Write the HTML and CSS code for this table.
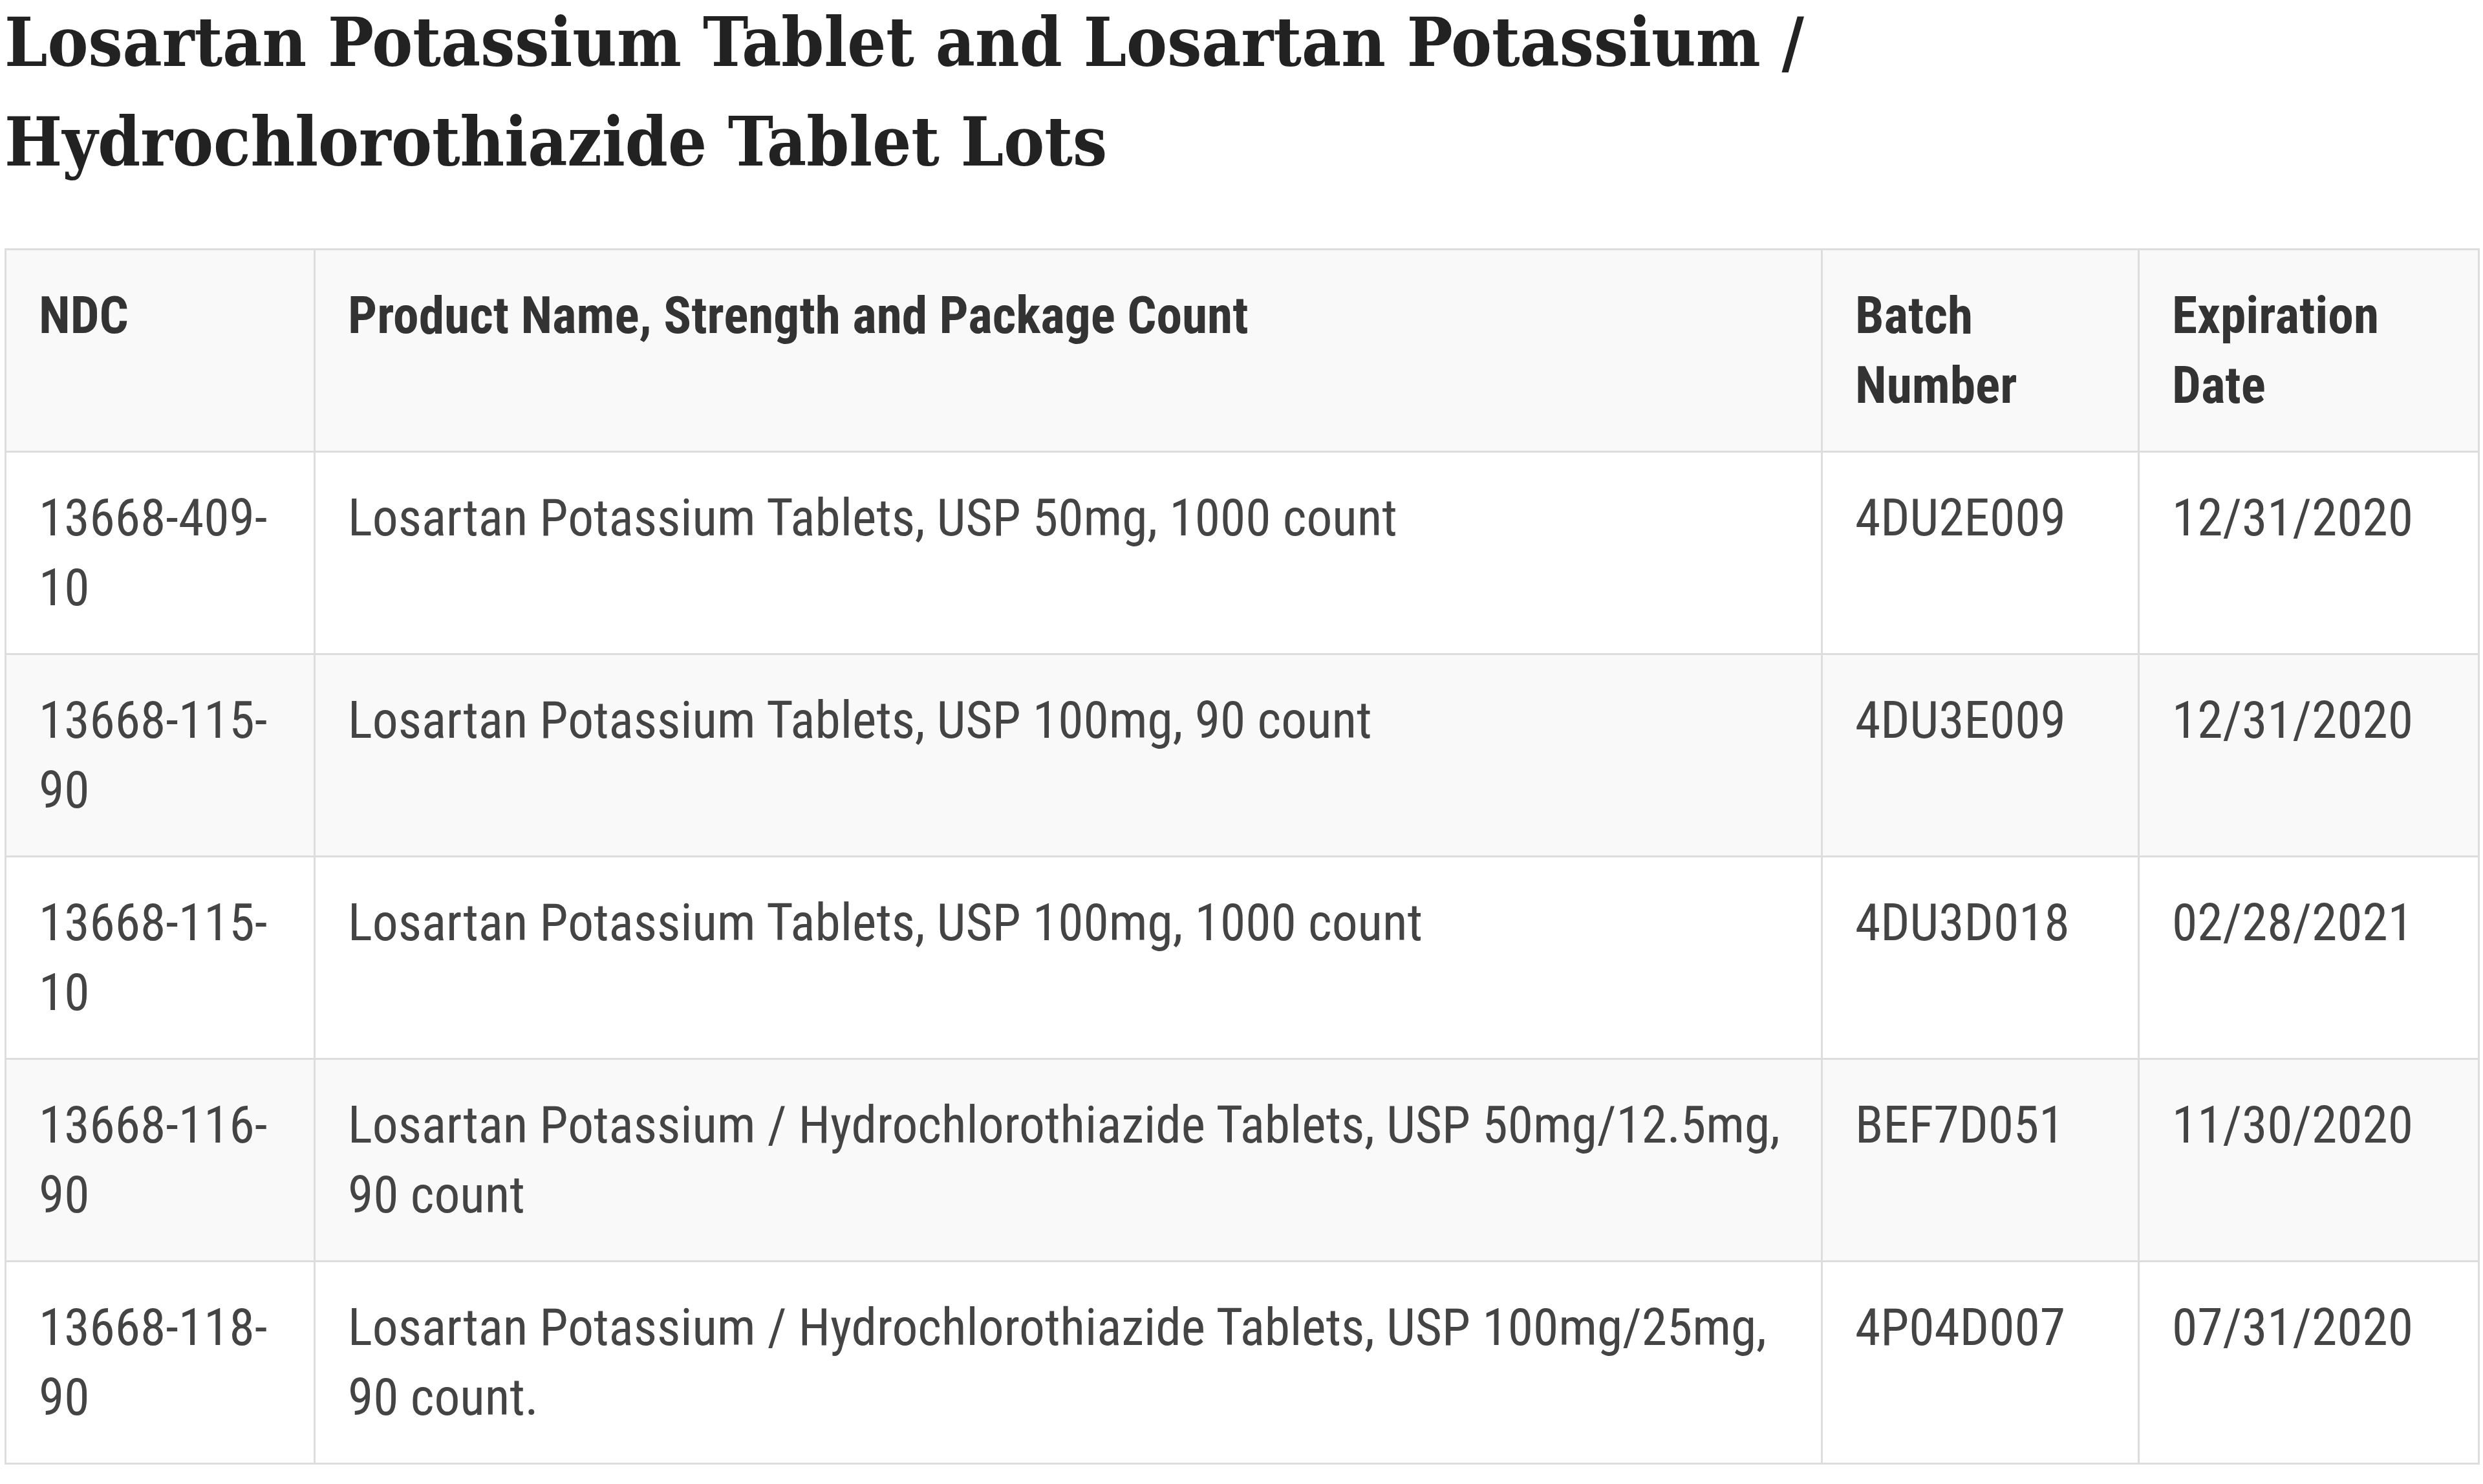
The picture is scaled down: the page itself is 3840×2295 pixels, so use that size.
FILE: index.html
```html
<!DOCTYPE html>
<html lang="en">
<head>
<meta charset="utf-8">
<title>Losartan Lots</title>
<link rel="stylesheet" href="styles.css">
</head>
<body>
<h2 class="title">Losartan Potassium Tablet and Losartan Potassium /<br>Hydrochlorothiazide Tablet Lots</h2>
<table class="lots">
  <colgroup>
    <col class="c-ndc"><col class="c-name"><col class="c-batch"><col class="c-exp">
  </colgroup>
  <thead>
    <tr><th>NDC</th><th>Product Name, Strength and Package Count</th><th>Batch Number</th><th>Expiration Date</th></tr>
  </thead>
  <tbody>
    <tr><td>13668-409-10</td><td>Losartan Potassium Tablets, USP 50mg, 1000 count</td><td>4DU2E009</td><td>12/31/2020</td></tr>
    <tr><td>13668-115-90</td><td>Losartan Potassium Tablets, USP 100mg, 90 count</td><td>4DU3E009</td><td>12/31/2020</td></tr>
    <tr><td>13668-115-10</td><td>Losartan Potassium Tablets, USP 100mg, 1000 count</td><td>4DU3D018</td><td>02/28/2021</td></tr>
    <tr><td>13668-116-90</td><td>Losartan Potassium / Hydrochlorothiazide Tablets, USP 50mg/12.5mg, 90 count</td><td>BEF7D051</td><td>11/30/2020</td></tr>
    <tr><td>13668-118-90</td><td>Losartan Potassium / Hydrochlorothiazide Tablets, USP 100mg/25mg, 90 count.</td><td>4P04D007</td><td>07/31/2020</td></tr>
  </tbody>
</table>
</body>
</html>
```
FILE: styles.css
```css
html, body {
  margin: 0;
  background: #ffffff;
}
body {
  padding: 0 5px 0 7px;
}
.title {
  font-family: "DejaVu Serif Condensed", "DejaVu Serif", serif;
  font-weight: bold;
  font-size: 105px;
  line-height: 154px;
  color: #222222;
  margin: -12px 0 88px 0;
}
.lots {
  width: 100%;
  border-collapse: collapse;
  font-family: Roboto, "Liberation Sans", sans-serif;
  font-stretch: 75%;
  font-size: 79.5px;
  line-height: 108px;
  color: #444444;
}
.c-ndc { width: 478px; }
.c-name { width: 2331px; }
.c-batch { width: 490px; }
.c-exp { width: auto; }
.lots th, .lots td {
  text-align: left;
  vertical-align: top;
  padding: 47px 40px 47px 50px;
  border: 3px solid #dddddd;
}
.lots th {
  font-weight: bold;
  color: #333333;
  background: #f9f9f9;
}
.lots tbody tr:nth-child(even) td {
  background: #f9f9f9;
}
```
